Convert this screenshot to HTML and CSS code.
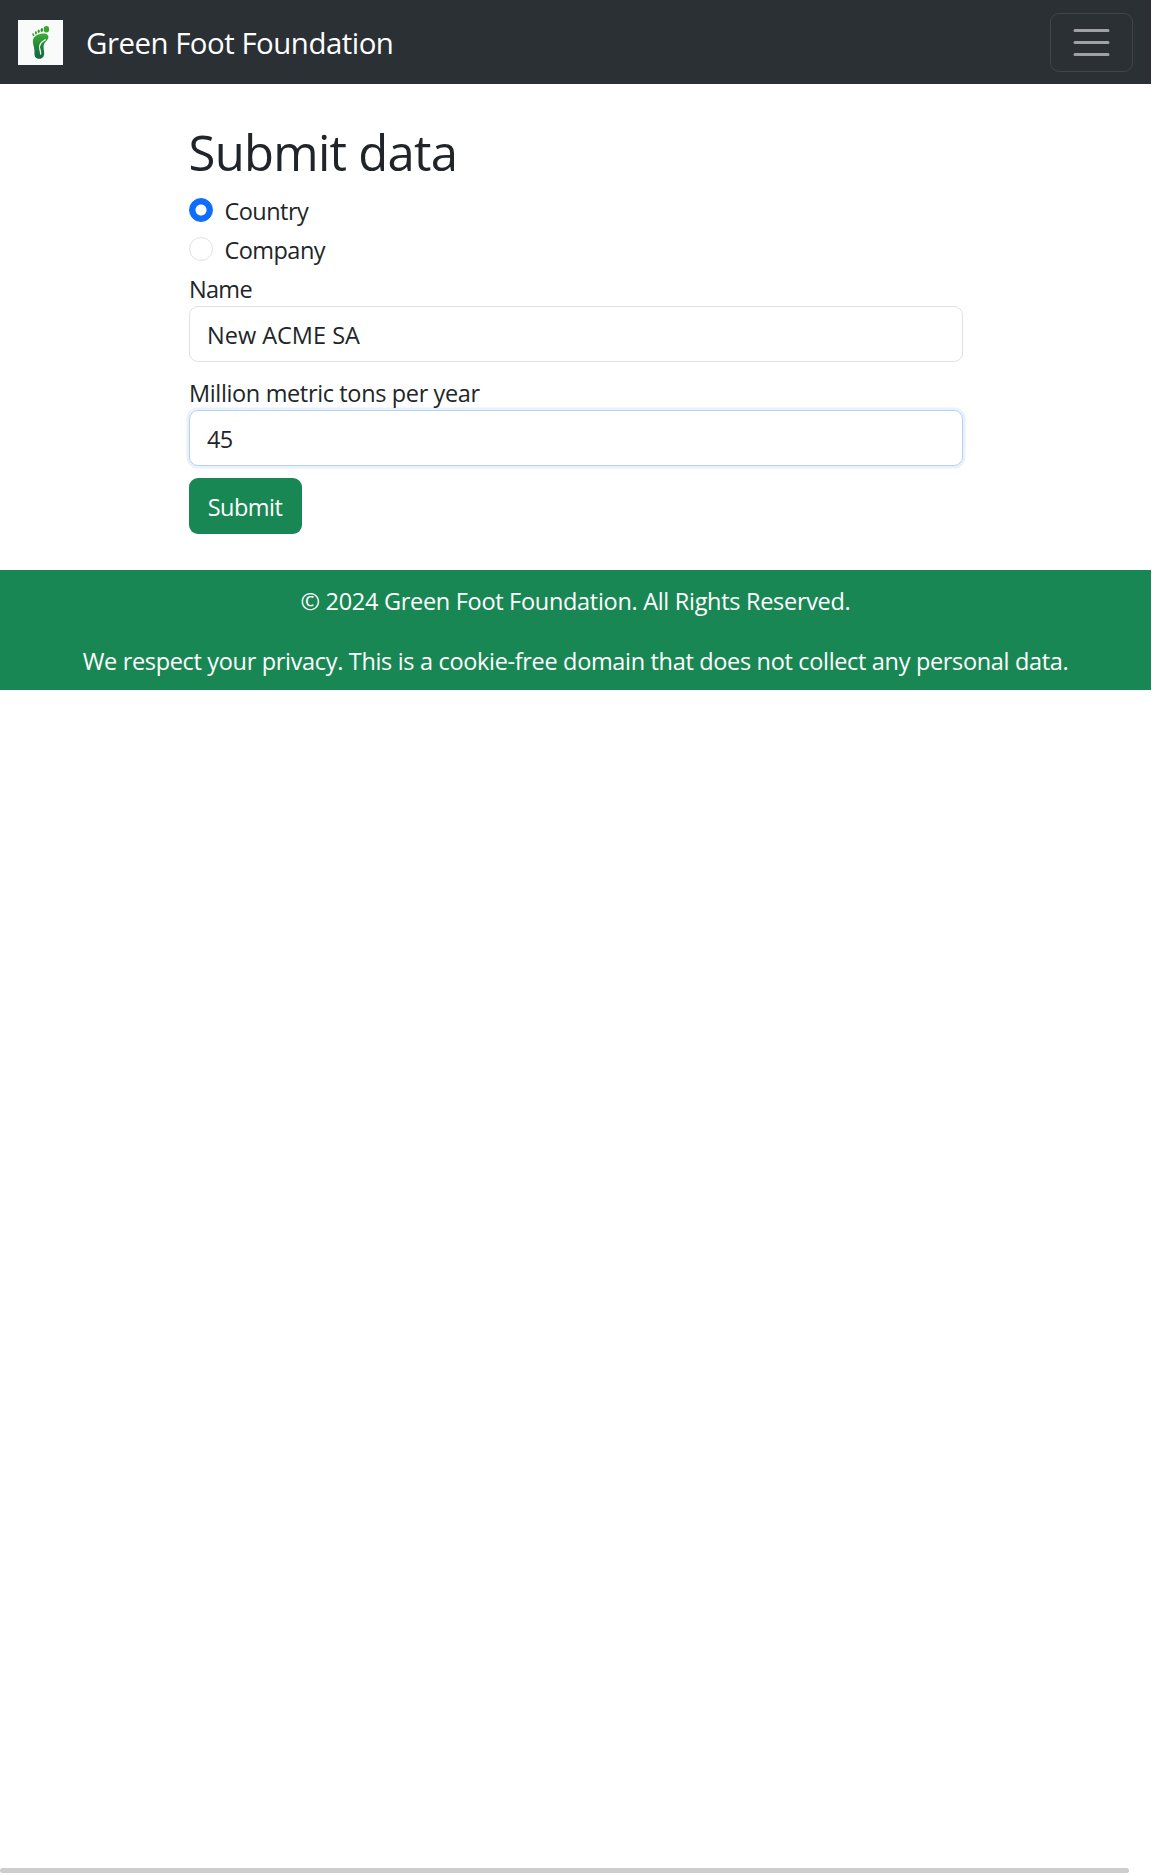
FILE: index.html
```html
<!DOCTYPE html>
<html lang="en">
<head>
<meta charset="utf-8">
<title>Green Foot Foundation</title>
<link rel="stylesheet" href="styles.css">
</head>
<body>
<div class="page">
  <header class="navbar">
    <a class="brand">
      <svg class="logo" viewBox="0 0 45 45">
        <defs>
          <linearGradient id="leaf" x1="0" y1="0" x2="0" y2="1">
            <stop offset="0" stop-color="#3cb034"/>
            <stop offset=".5" stop-color="#1f8538"/>
            <stop offset="1" stop-color="#146545"/>
          </linearGradient>
        </defs>
        <rect width="45" height="45" fill="#f8fbf9"/>
        <path fill="url(#leaf)" d="M23.2 13.7C27.5 12.8 30.8 14.4 30.4 17.5C30 20.2 26.8 21.8 25.8 25C24.8 29 27.6 33 25.3 36.8C24 39.3 19 39.6 17.2 37C15.8 34.7 17 31.5 16 27.5C15.2 23.8 14 20.7 15.9 17.8C17.4 15.3 20.3 14.2 23.2 13.7Z"/>
        <path fill="none" stroke="#f8fbf9" stroke-width="1.3" stroke-linecap="round" d="M27.2 19.8C22.8 21.8 20.6 25.6 21.9 29.5C22.6 31.6 22.9 32.5 22.6 34"/>
        <ellipse cx="28.4" cy="9.2" rx="2.7" ry="3.2" fill="#3ba52b"/>
        <ellipse cx="23.8" cy="10" rx="1.3" ry="2" fill="#309b32" transform="rotate(10 23.8 10)"/>
        <ellipse cx="20.7" cy="11.2" rx="1.1" ry="1.8" fill="#309b32"/>
        <ellipse cx="17.9" cy="12.9" rx="1" ry="1.6" fill="#309b32" transform="rotate(-10 17.9 12.9)"/>
        <ellipse cx="15.3" cy="14.7" rx=".9" ry="1.5" fill="#309b32" transform="rotate(-20 15.3 14.7)"/>
      </svg>
      <span class="brand-name">Green Foot Foundation</span>
    </a>
    <button class="toggler" type="button" aria-label="Toggle navigation">
      <svg class="toggler-icon" viewBox="0 0 30 30"><path stroke="#fff" stroke-opacity=".55" stroke-linecap="round" stroke-miterlimit="10" stroke-width="2" d="M4 7h22M4 15h22M4 23h22"/></svg>
    </button>
  </header>
  <main class="content">
    <h1 class="title">Submit data</h1>
    <label class="check"><span class="radio radio-on"></span><span class="check-text">Country</span></label>
    <label class="check"><span class="radio"></span><span class="check-text">Company</span></label>
    <label class="label label-name">Name</label>
    <div class="field">New ACME SA</div>
    <label class="label">Million metric tons per year</label>
    <div class="field field-focus">45</div>
    <button class="submit" type="button">Submit</button>
  </main>
  <footer class="footer">
    <p class="copyright">© 2024 Green Foot Foundation. All Rights Reserved.</p>
    <p class="privacy">We respect your privacy. This is a cookie-free domain that does not collect any personal data.</p>
  </footer>
  <div class="scrollbar"></div>
</div>
</body>
</html>
```
FILE: styles.css
```css
* { box-sizing: border-box; }

body {
  margin: 0;
  background: #fff;
  color: #212529;
  font: 23.5px/36px "Open Sans", "Noto Sans", sans-serif;
}

.page {
  display: flex;
  flex-direction: column;
  width: 1151px;
  height: 1875px;
}

.navbar {
  display: flex;
  align-items: center;
  justify-content: space-between;
  height: 84px;
  padding: 0 18px;
  background: #2b3035;
}

.brand { display: flex; align-items: center; gap: 23px; color: #fff; }
.logo { display: block; width: 45px; height: 45px; }
.brand-name { padding-top: 2px; font-size: 29.4px; line-height: 45px; letter-spacing: -.48px; white-space: nowrap; }

.toggler {
  display: flex;
  align-items: center;
  justify-content: center;
  width: 83px;
  height: 59px;
  padding: 0;
  border: 1px solid #404549;
  border-radius: 9px;
  background: transparent;
}
.toggler-icon { width: 45px; height: 45px; }

.content { width: 774px; height: 486px; margin-left: 189px; padding-top: 38px; }

.title {
  height: 73px;
  margin: 0 0 0 -.5px;
  font-size: 49px;
  font-weight: 400;
  line-height: 60px;
  letter-spacing: -.72px;
}

.check { display: flex; gap: 11.5px; height: 36px; margin-bottom: 3px; }
.check-text { line-height: 32px; letter-spacing: -.55px; }
.radio { width: 24px; height: 24px; margin-top: 3px; border: 1px solid #dee2e6; border-radius: 50%; }
.radio-on { border-color: #0d6efd; background: radial-gradient(circle, #fff 5px, #0d6efd 6px); }

.label { display: block; height: 33px; line-height: 32px; letter-spacing: -.36px; }
.label-name { letter-spacing: -.7px; }

.field {
  height: 56px;
  margin-bottom: 15px;
  padding: 10px 17px;
  border: 1px solid #dee2e6;
  border-radius: 9px;
}
.field-focus { margin-bottom: 12px; border-color: #b9d0f2; box-shadow: 0 0 0 2.5px #e7f1ff; letter-spacing: -.6px; }

.submit {
  display: block;
  width: 113px;
  height: 56px;
  padding: 2px 1px 0 0;
  border: 0;
  border-radius: 9px;
  background: #198754;
  color: #fff;
  font: inherit;
  letter-spacing: -.5px;
}

.footer { height: 120px; padding: 13px 0 0; background: #198754; color: #fff; text-align: center; white-space: nowrap; }
.footer p { margin: 0 0 24px; }
.copyright { letter-spacing: -.3px; }
.privacy { letter-spacing: -.33px; }

.scrollbar { width: 1129px; height: 5px; margin: auto 0 2px; border-radius: 3px; background: #cdcdcd; }
```
